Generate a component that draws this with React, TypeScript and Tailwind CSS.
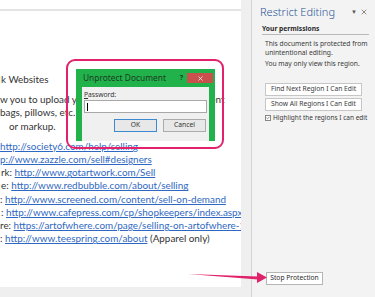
import { Check, X } from "lucide-react";

const doc = "font-['Lato',sans-serif]";
const ui = "font-['Noto_Sans',sans-serif]";

function Link({ children }: { children: React.ReactNode }) {
  return <span className="text-[#2f68c2] underline decoration-[0.5px] underline-offset-[1px]">{children}</span>;
}

function DocPage() {
  return (
    <div className={`relative h-[287px] w-[241px] shrink-0 overflow-hidden bg-white ${doc} text-[9.9px] leading-[13.2px] text-[#333]`}>
      <div className="mt-[9px] h-[2px] bg-[#e4e4e4]" />
      <div className="mt-[62px] whitespace-nowrap pl-[1px]">k Websites</div>
      <div className="mt-[7px] whitespace-nowrap">
        <div>w you to upload your artwork and sell it on different</div>
        <div>bags, pillows, etc. The sites will add it to the</div>
        <div className="pl-[9px]">or markup.</div>
      </div>
      <div className="mt-[7px] whitespace-nowrap">
        <div>
          <Link>http://society6.com/help/selling</Link>
        </div>
        <div>
          <Link>p://www.zazzle.com/sell#designers</Link>
        </div>
        <div className="pl-[1px]">
          rk: <Link>http://www.gotartwork.com/Sell</Link>
        </div>
        <div className="pl-[1px]">
          e: <Link>http://www.redbubble.com/about/selling</Link>
        </div>
        <div>
          : <Link>http://www.screened.com/content/sell-on-demand</Link>
        </div>
        <div className="pl-[1px]">
          : <Link>http://www.cafepress.com/cp/shopkeepers/index.aspx?p=</Link>
        </div>
        <div>
          re: <Link>https://artofwhere.com/page/selling-on-artofwhere-111</Link>
        </div>
        <div>
          : <Link>http://www.teespring.com/about</Link> (Apparel only)
        </div>
      </div>
    </div>
  );
}

function PanelButton({ label }: { label: string }) {
  return (
    <div className="flex h-[13px] w-[97px] items-center justify-center border border-[#c6c6c6] bg-white text-[6.7px] text-[#3a3a3a]">
      {label}
    </div>
  );
}

function RestrictPanel() {
  return (
    <div className={`flex h-full flex-1 flex-col border-l border-[#d4d4d4] bg-[#f3f3f3] pl-[8px] pr-[6px] ${ui}`}>
      <div className="mt-[3px] flex items-center justify-between">
        <span className="text-[11px] font-light leading-[18px] text-[#2b5797]">Restrict Editing</span>
        <span className="flex items-center gap-[3px] pr-[1px] text-[#555]">
          <span className="text-[6px]">▼</span>
          <X size={8} strokeWidth={2} />
        </span>
      </div>
      <div className="ml-[2px] mt-[4px] border-b border-[#b9b9b9] pb-[1px] text-[6.7px] font-bold leading-[8px] text-[#2a2a2a]">
        Your permissions
      </div>
      <div className="ml-[5px] mt-[4px] text-[6.7px] leading-[9px] text-[#3a3a3a]">
        <div>This document is protected from</div>
        <div>unintentional editing.</div>
        <div className="mt-[2px]">You may only view this region.</div>
      </div>
      <div className="ml-[5px] mt-[15px] flex flex-col gap-[2px]">
        <PanelButton label="Find Next Region I Can Edit" />
        <PanelButton label="Show All Regions I Can Edit" />
      </div>
      <div className="-mr-[6px] ml-[5px] mt-[2px] flex items-center gap-[2px] whitespace-nowrap text-[6.5px] text-[#3a3a3a]">
        <span className="flex h-[6px] w-[6px] shrink-0 items-center justify-center border border-[#888] bg-white">
          <Check size={6} strokeWidth={3} className="text-[#333]" />
        </span>
        <span>Highlight the regions I can edit</span>
      </div>
      <div className="flex-1" />
      <div className="mb-[12px] ml-[6px] flex h-[13px] w-[57px] items-center justify-center border border-[#b5b5b5] bg-white text-[6.7px] text-[#2a2a2a]">
        Stop Protection
      </div>
    </div>
  );
}

function UnprotectDialog() {
  return (
    <div className={`absolute left-[76px] top-[69px] flex h-[72px] w-[139px] flex-col bg-[#22b24c] px-[6px] ${ui}`}>
      <div className="flex h-[18px] items-center">
        <span className="ml-[1px] text-[8.4px] text-[#1d3b22]">Unprotect Document</span>
        <span className="ml-auto mr-[4px] text-[7px] font-bold text-[#1d3b22]">?</span>
        <span className="-mr-[4px] flex h-[10px] w-[26px] items-center justify-center bg-[#c9504d] text-white">
          <X size={7} strokeWidth={2.5} />
        </span>
      </div>
      <div className="flex flex-1 flex-col bg-[#f0f0f0] px-[2px] pb-[5px]">
        <div className="mt-[3px] text-[6.7px] leading-[9px] text-[#333] first-letter:underline">Password:</div>
        <div className="mt-[1px] flex h-[13px] items-center border border-[#a8a8a8] bg-white pl-[2px]">
          <div className="h-[8px] w-[1px] bg-black" />
        </div>
        <div className="mt-[6px] flex justify-end gap-[6px] pr-[1px]">
          <div className="flex h-[13px] w-[43px] items-center justify-center border border-[#3c8ad0] bg-[#e8e8e8] text-[6.7px] text-[#333]">
            OK
          </div>
          <div className="flex h-[13px] w-[43px] items-center justify-center border border-[#acacac] bg-[#e8e8e8] text-[6.7px] text-[#333]">
            Cancel
          </div>
        </div>
      </div>
    </div>
  );
}

export default function App() {
  return (
    <div className="relative flex h-[297px] w-[375px] overflow-hidden bg-[#efefef]">
      <DocPage />
      <div className="w-[10px] shrink-0" />
      <RestrictPanel />
      <UnprotectDialog />
      <div className="pointer-events-none absolute left-[66px] top-[59px] h-[90px] w-[158px] rounded-[9px] border-2 border-[#e3226b]" />
      <svg className="pointer-events-none absolute left-0 top-0" width="375" height="297">
        <path d="M188 274 L258 276.5 L258 279.5 Z" fill="#e0226a" />
        <path d="M257 272 L267 277.5 L257 283 Z" fill="#e0226a" />
      </svg>
    </div>
  );
}
